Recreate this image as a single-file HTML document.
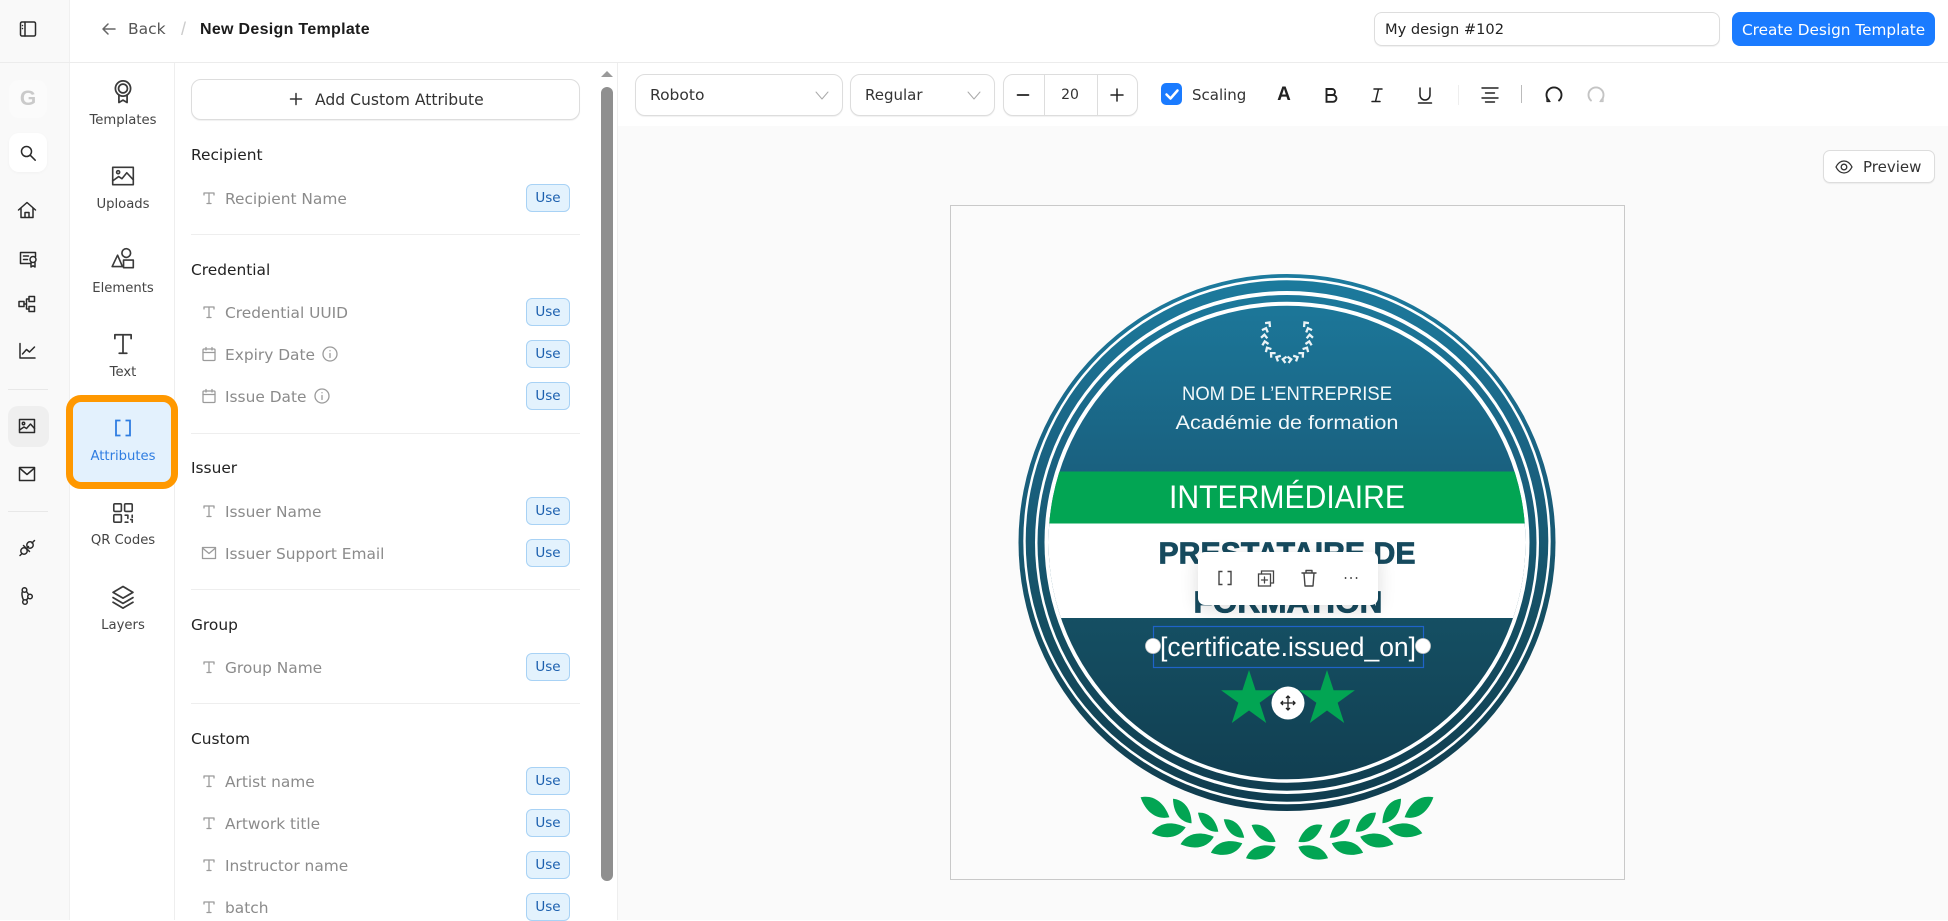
<!DOCTYPE html>
<html><head><meta charset="utf-8"><title>New Design Template</title>
<style>
html,body{margin:0;padding:0;background:#fff}
body{position:relative;width:1948px;height:920px;overflow:hidden;font-family:"DejaVu Sans","Liberation Sans",sans-serif;color:#222}
.b{position:absolute;box-sizing:border-box}
.t{position:absolute;white-space:nowrap;line-height:20px;margin-top:-10px}
.c{transform:translateX(-50%)}
.i{position:absolute;width:24px;height:24px;margin:-12px 0 0 -12px;fill:none;stroke:#2a2a2a;stroke-width:1.5;stroke-linecap:round;stroke-linejoin:round}
.n{font-size:13.2px;color:#444}
.h{font-size:15.4px;color:#222;left:191px}
.r{font-size:15.4px;color:#8b8b8b;left:225px}
.u{position:absolute;left:526px;width:44px;height:28px;margin-top:-14px;box-sizing:border-box;background:#e3f2fd;border:1px solid #a8d2f5;border-radius:6px;color:#1b5fae;font-size:13.500px;line-height:27px;text-align:center}
.d{position:absolute;left:191px;width:389px;height:1px;background:#eee}
.g{stroke:#9b9b9b;stroke-width:1.3}
.s{position:absolute;box-sizing:border-box;background:#fff;border:1px solid #ddd;border-radius:10px;box-shadow:0 1px 1px rgba(0,0,0,.06)}
</style></head><body>

<!-- rail -->
<div class="b" style="left:0;top:0;width:70px;height:920px;background:#f9f9f9;border-right:1px solid #f0f0f0"></div>
<div class="b" style="left:70px;top:0;width:1878px;height:62px;background:#fff"></div>
<div class="b" style="left:0;top:62px;width:1948px;height:1px;background:#ececec"></div>
<div class="b" style="left:174px;top:63px;width:1px;height:857px;background:#eee"></div>
<div class="b" style="left:617px;top:63px;width:1px;height:857px;background:#eee"></div>
<div class="b" style="left:618px;top:126px;width:1330px;height:794px;background:#fafafa"></div>

<svg class="i" style="left:28px;top:29px" viewBox="0 0 24 24"><rect x="4.500" y="5" width="15" height="14" rx="1.500"/><path d="M9 5v14M6.500 8.500h0M6.500 11.500h0"/></svg>

<div class="b" style="left:9px;top:80px;width:38px;height:38px;border-radius:10px;background:#fbfbfb"></div>
<div class="t" style="left:28px;top:99px;font-size:21px;font-weight:700;color:#cacaca;font-family:'Liberation Sans',sans-serif"><span class="c" style="position:absolute;left:0">G</span></div>
<div class="b" style="left:9px;top:133px;width:38px;height:39px;border-radius:10px;background:#fff;box-shadow:0 1px 3px rgba(0,0,0,.03)"></div>
<svg class="i" style="left:28px;top:153px" viewBox="0 0 24 24"><circle cx="10.500" cy="10.500" r="5"/><path d="M14.200 14.200l5 5"/></svg>
<svg class="i" style="left:27px;top:210px" viewBox="0 0 24 24"><path d="M3.500 12L12 4.500l8.500 7.500M6 10v9.500h12V10M10 19.500v-5h4v5"/></svg>
<svg class="i" style="left:28px;top:258px" viewBox="0 0 24 24"><path d="M15 17.500H4.500v-11h15v4"/><path d="M7.500 10h5M7.500 13.500h4"/><circle cx="17" cy="13.500" r="3"/><path d="M15 16.500v4.500l2-1.200 2 1.200v-4.500"/></svg>
<svg class="i" style="left:27px;top:304px" viewBox="0 0 24 24"><rect x="4" y="9.500" width="5" height="5"/><rect x="14" y="4.500" width="5.500" height="5"/><rect x="14" y="14.500" width="5.500" height="5"/><path d="M9 12h2.500V7H14M11.500 12v5H14"/></svg>
<svg class="i" style="left:27px;top:351px" viewBox="0 0 24 24"><path d="M5 4.500V19h15M7.500 15l4-4.500 3 2.500 5-5"/></svg>
<div class="b" style="left:8px;top:389px;width:40px;height:1px;background:#e8e8e8"></div>
<div class="b" style="left:8px;top:406px;width:41px;height:41px;border-radius:10px;background:#efefef"></div>
<svg class="i" style="left:27px;top:426px" viewBox="0 0 24 24"><rect x="4.500" y="5.500" width="15" height="13"/><circle cx="8.500" cy="9.500" r="1.200"/><path d="M4.500 16l4.500-3 2.500 1.500 4-4.500 4 4.500"/></svg>
<svg class="i" style="left:27px;top:474px" viewBox="0 0 24 24"><rect x="4.500" y="5.500" width="15" height="13"/><path d="M4.500 6l7.500 6.500L19.500 6"/></svg>
<div class="b" style="left:8px;top:511px;width:40px;height:1px;background:#e8e8e8"></div>
<svg class="i" style="left:27px;top:548px" viewBox="0 0 24 24"><circle cx="9" cy="15" r="3.200"/><circle cx="15" cy="9" r="3.200"/><path d="M5 19.500l2-2M17 7l2.500-2.500M11.500 12.500l2-2M8.500 9.500l6 6"/></svg>
<svg class="i" style="left:27px;top:596px" viewBox="0 0 24 24"><circle cx="9.500" cy="6" r="2.300"/><circle cx="15" cy="12.500" r="2.300"/><circle cx="10" cy="18" r="2.300"/><path d="M11.500 7.500l2 3M13 14l-1.500 2M7.500 7.500c-1 1.500-.5 6 1 8.500"/></svg>

<!-- header -->
<svg class="i" style="left:109px;top:29px;stroke:#666" viewBox="0 0 24 24"><path d="M18 12H6.500M11 7l-5 5 5 5"/></svg>
<div class="t" style="left:128px;top:29px;font-size:15.500px;color:#555">Back</div>
<div class="t" style="left:181px;top:29px;font-size:18px;color:#ccc;font-family:'Liberation Sans',sans-serif">/</div>
<div class="t" style="left:200px;top:30px;font-size:16px;font-weight:700;color:#1b1b1b;font-family:'Liberation Sans',sans-serif;letter-spacing:.3px">New Design Template</div>
<div class="s" style="left:1374px;top:12px;width:346px;height:34px;border-radius:8px"></div>
<div class="t" style="left:1385px;top:29.500px;font-size:14.600px;color:#222">My design #102</div>
<div class="b" style="left:1732px;top:12px;width:203px;height:34px;border-radius:8px;background:#1a7bff"></div>
<div class="t" style="left:1742px;top:29.500px;font-size:15.300px;color:#fff">Create Design Template</div>

<!-- module nav -->
<svg class="i" style="left:123px;top:92px;width:28px;height:28px;margin:-14px 0 0 -14px;stroke:#3a3a3a" viewBox="0 0 24 24"><circle cx="12" cy="9" r="6.500"/><circle cx="12" cy="9" r="3.800"/><path d="M8.500 14.500V21l3.500-2 3.500 2v-6.500"/></svg>
<div class="t n c" style="left:123px;top:120.500px">Templates</div>
<svg class="i" style="left:123px;top:176px;width:26px;height:26px;margin:-13px 0 0 -13px;stroke:#3a3a3a" viewBox="0 0 24 24"><rect x="2.500" y="4" width="19" height="16"/><circle cx="7.500" cy="8.500" r="1.400"/><path d="M2.500 16.500l5.500-4 3 2 4.500-5.500 6 6.500"/></svg>
<div class="t n c" style="left:123px;top:204.500px">Uploads</div>
<svg class="i" style="left:123px;top:259px;width:26px;height:26px;margin:-13px 0 0 -13px;stroke:#3a3a3a" viewBox="0 0 24 24"><circle cx="15" cy="6.500" r="4"/><path d="M7 8.500l-5 10.500h9.500z"/><rect x="12.500" y="13" width="9" height="7"/></svg>
<div class="t n c" style="left:123px;top:288.500px">Elements</div>
<svg class="i" style="left:123px;top:344px;width:26px;height:26px;margin:-13px 0 0 -13px;stroke:#3a3a3a;stroke-width:1.600" viewBox="0 0 24 24"><path d="M4.500 7V3.500h15V7M12 3.500V20.500M8.500 20.500h7"/></svg>
<div class="t n c" style="left:123px;top:372.500px">Text</div>

<div class="b" style="left:66px;top:395px;width:112px;height:94px;border:7px solid #ff9800;border-radius:15px;background:#e3f1fd"></div>
<svg class="i" style="left:123px;top:428px;stroke:#2f7de1;stroke-width:1.800;stroke-linecap:butt;stroke-linejoin:miter" viewBox="0 0 24 24"><path d="M9.500 4.500H5v15h4.500M14.500 4.500H19v15h-4.500"/></svg>
<div class="t n c" style="left:123px;top:457px;color:#2f7de1">Attributes</div>
<svg class="i" style="left:123px;top:513px;width:26px;height:26px;margin:-13px 0 0 -13px;stroke:#3a3a3a" viewBox="0 0 24 24"><rect x="3.500" y="3.500" width="7" height="7" rx="1"/><rect x="13.500" y="3.500" width="7" height="7" rx="1"/><rect x="3.500" y="13.500" width="7" height="7" rx="1"/><path d="M14 14h2.500v3M20.500 14v2M14 20.500h2.500M19 18h1.500v2.500"/></svg>
<div class="t n c" style="left:123px;top:540.500px">QR Codes</div>
<svg class="i" style="left:123px;top:597px;width:28px;height:28px;margin:-14px 0 0 -14px;stroke:#3a3a3a" viewBox="0 0 24 24"><path d="M12 3l8.500 5-8.500 5-8.500-5zM3.500 12.500L12 17.500l8.500-5M3.500 16.500L12 21.500l8.500-5"/></svg>
<div class="t n c" style="left:123px;top:625.500px">Layers</div>

<!-- attribute panel -->
<div class="s" style="left:191px;top:79px;width:389px;height:41px"></div>
<svg class="i" style="left:296px;top:99px;stroke:#333" viewBox="0 0 24 24"><path d="M12 6.500v11M6.500 12h11"/></svg>
<div class="t" style="left:315px;top:99.500px;font-size:15.600px;color:#333">Add Custom Attribute</div>

<div class="t h" style="top:154.500px">Recipient</div>
<svg class="i g" style="left:209px;top:198px" viewBox="0 0 24 24"><path d="M7 9V7h10v2M12 7v10.500M10 17.500h4"/></svg>
<div class="t r" style="top:198.500px">Recipient Name</div><div class="u" style="top:198px">Use</div>
<div class="d" style="top:234px"></div>

<div class="t h" style="top:269.500px">Credential</div>
<svg class="i g" style="left:209px;top:312px" viewBox="0 0 24 24"><path d="M7 9V7h10v2M12 7v10.500M10 17.500h4"/></svg>
<div class="t r" style="top:312.500px">Credential UUID</div><div class="u" style="top:312px">Use</div>
<svg class="i g" style="left:209px;top:354px" viewBox="0 0 24 24"><rect x="6" y="7" width="12" height="11.500" rx="1"/><path d="M6 10.500h12M9 5.500v2.500M15 5.500v2.500"/></svg>
<div class="t r" style="top:354.500px">Expiry Date</div><div class="u" style="top:354px">Use</div>
<svg class="i g" style="left:330px;top:354px" viewBox="0 0 24 24"><circle cx="12" cy="12" r="7"/><path d="M12 11.500v4M12 8.700v.1"/></svg>
<svg class="i g" style="left:209px;top:396px" viewBox="0 0 24 24"><rect x="6" y="7" width="12" height="11.500" rx="1"/><path d="M6 10.500h12M9 5.500v2.500M15 5.500v2.500"/></svg>
<div class="t r" style="top:396.500px">Issue Date</div><div class="u" style="top:396px">Use</div>
<svg class="i g" style="left:322px;top:396px" viewBox="0 0 24 24"><circle cx="12" cy="12" r="7"/><path d="M12 11.500v4M12 8.700v.1"/></svg>
<div class="d" style="top:433px"></div>

<div class="t h" style="top:467.500px">Issuer</div>
<svg class="i g" style="left:209px;top:511px" viewBox="0 0 24 24"><path d="M7 9V7h10v2M12 7v10.500M10 17.500h4"/></svg>
<div class="t r" style="top:511.500px">Issuer Name</div><div class="u" style="top:511px">Use</div>
<svg class="i g" style="left:209px;top:553px" viewBox="0 0 24 24"><rect x="5.500" y="6.500" width="13" height="11"/><path d="M5.500 7l6.500 5.500L18.500 7"/></svg>
<div class="t r" style="top:553.500px">Issuer Support Email</div><div class="u" style="top:553px">Use</div>
<div class="d" style="top:589px"></div>

<div class="t h" style="top:624.500px">Group</div>
<svg class="i g" style="left:209px;top:667px" viewBox="0 0 24 24"><path d="M7 9V7h10v2M12 7v10.500M10 17.500h4"/></svg>
<div class="t r" style="top:667.500px">Group Name</div><div class="u" style="top:667px">Use</div>
<div class="d" style="top:703px"></div>

<div class="t h" style="top:738.500px">Custom</div>
<svg class="i g" style="left:209px;top:781px" viewBox="0 0 24 24"><path d="M7 9V7h10v2M12 7v10.500M10 17.500h4"/></svg>
<div class="t r" style="top:781.500px">Artist name</div><div class="u" style="top:781px">Use</div>
<svg class="i g" style="left:209px;top:823px" viewBox="0 0 24 24"><path d="M7 9V7h10v2M12 7v10.500M10 17.500h4"/></svg>
<div class="t r" style="top:823.500px">Artwork title</div><div class="u" style="top:823px">Use</div>
<svg class="i g" style="left:209px;top:865px" viewBox="0 0 24 24"><path d="M7 9V7h10v2M12 7v10.500M10 17.500h4"/></svg>
<div class="t r" style="top:865.500px">Instructor name</div><div class="u" style="top:865px">Use</div>
<svg class="i g" style="left:209px;top:907px" viewBox="0 0 24 24"><path d="M7 9V7h10v2M12 7v10.500M10 17.500h4"/></svg>
<div class="t r" style="top:907.500px">batch</div><div class="u" style="top:907px">Use</div>

<!-- scrollbar -->
<div class="b" style="left:601px;top:87px;width:12px;height:794px;border-radius:6px;background:#8f8f8f"></div>
<svg style="position:absolute;left:601px;top:70px" width="12" height="8"><path d="M6 1L12 7H0z" fill="#9a9a9a"/></svg>

<!-- toolbar -->
<div class="s" style="left:635px;top:74px;width:208px;height:42px"></div>
<div class="t" style="left:650px;top:95px;font-size:15.500px;color:#333">Roboto</div>
<svg class="i" style="left:822px;top:95px;stroke:#aaa;stroke-width:1" viewBox="0 0 24 24"><path d="M6 9l6 7 6-7"/></svg>
<div class="s" style="left:850px;top:74px;width:145px;height:42px"></div>
<div class="t" style="left:865px;top:95px;font-size:15px;color:#333">Regular</div>
<svg class="i" style="left:974px;top:95px;stroke:#aaa;stroke-width:1" viewBox="0 0 24 24"><path d="M6 9l6 7 6-7"/></svg>
<div class="s" style="left:1003px;top:74px;width:135px;height:42px"></div>
<div class="b" style="left:1044px;top:75px;width:1px;height:40px;background:#ddd"></div>
<div class="b" style="left:1097px;top:75px;width:1px;height:40px;background:#ddd"></div>
<svg class="i" style="left:1023px;top:95px;stroke:#222;stroke-width:1.700" viewBox="0 0 24 24"><path d="M6.500 12h11"/></svg>
<div class="t c" style="left:1070px;top:95px;font-size:14px;color:#333">20</div>
<svg class="i" style="left:1117px;top:95px;stroke:#222;stroke-width:1.500" viewBox="0 0 24 24"><path d="M12 6v12M6 12h12"/></svg>
<div class="b" style="left:1161px;top:83px;width:21px;height:22px;border-radius:5px;background:#1a7bff"></div>
<svg class="i" style="left:1171.500px;top:94px;stroke:#fff;stroke-width:2.500" viewBox="0 0 24 24"><path d="M6.500 12.500l4 4 7-8"/></svg>
<div class="t" style="left:1192px;top:95px;font-size:15px;color:#333">Scaling</div>
<div class="t c" style="left:1284px;top:95px;font-size:19px;font-weight:700;color:#222;font-family:'Liberation Sans',sans-serif">A</div>
<svg class="i" style="left:1331px;top:95px;stroke:#222;stroke-width:1.900;stroke-linejoin:miter" viewBox="0 0 24 24"><path d="M7.500 6h5.500a3 3 0 010 6H7.500zM7.500 12h6.500a3.400 3.400 0 010 6.800H7.500z"/></svg>
<svg class="i" style="left:1377px;top:95px;stroke:#222;stroke-width:1.500" viewBox="0 0 24 24"><path d="M9 6h8M7 18.500h8M13.500 6L10.500 18.500"/></svg>
<svg class="i" style="left:1425px;top:95px;stroke:#222;stroke-width:1.500" viewBox="0 0 24 24"><path d="M7 5v7a5 5 0 0010 0V5M5.500 20h13"/></svg>
<div class="b" style="left:1458px;top:85px;width:1px;height:20px;background:#eee"></div>
<svg class="i" style="left:1490px;top:95px;stroke:#222;stroke-width:1.400" viewBox="0 0 24 24"><path d="M4 6h16M7.500 11h9M4 16h16M7.500 20h9" transform="translate(0 -1)"/></svg>
<div class="b" style="left:1521px;top:85px;width:1px;height:18px;background:#bbb"></div>
<svg class="i" style="left:1554px;top:95px;stroke:#222;stroke-width:1.900" viewBox="0 0 24 24"><path d="M7 17.500A7.500 7.500 0 1117 17.500"/><path d="M5 15.500v3h3" stroke-width="1.300"/></svg>
<svg class="i" style="left:1596px;top:95px;stroke:#c4c4c4;stroke-width:1.900" viewBox="0 0 24 24"><path d="M7 17.500A7.500 7.500 0 1117 17.500"/><path d="M19 15.500v3h-3" stroke-width="1.300"/></svg>

<!-- preview -->
<div class="s" style="left:1823px;top:150px;width:112px;height:33px;border-radius:7px"></div>
<svg class="i" style="left:1844px;top:167px;stroke:#333;stroke-width:1.300" viewBox="0 0 24 24"><path d="M4 12c2-4 5-6 8-6s6 2 8 6c-2 4-5 6-8 6s-6-2-8-6z"/><circle cx="12" cy="12" r="2.800"/></svg>
<div class="t" style="left:1863px;top:167px;font-size:15px;color:#333">Preview</div>

<!-- canvas -->
<div class="b" style="left:950px;top:205px;width:675px;height:675px;border:1px solid #c9c9c9;background:#fbfbfb"></div>

<svg style="position:absolute;left:0;top:0" width="1948" height="920" viewBox="0 0 1948 920">
<defs>
<linearGradient id="gr" gradientUnits="userSpaceOnUse" x1="0" y1="274" x2="0" y2="811">
<stop offset="0" stop-color="#1c7b9e"/><stop offset=".36" stop-color="#1a6180"/><stop offset=".64" stop-color="#154f63"/><stop offset="1" stop-color="#103c4e"/>
</linearGradient>
<clipPath id="cp"><ellipse cx="1287" cy="542.500" rx="238.500" ry="236.800"/></clipPath>
<path id="lf" d="M0 0C.22 -.24 .58 -.3 1 0C.78 .24 .42 .3 0 0"/>
<path id="ch" d="M1290 356.500L1286.700 359.700L1290 362.800" fill="none" stroke="#eaf3f6" stroke-width="2.300"/>
<g id="lv" fill="#02a553">
<use href="#lf" transform="matrix(28.800 20 -20 28.800 1140.600 797.300)"/>
<use href="#lf" transform="matrix(18.600 24.600 -24.600 18.600 1173 798.700)"/>
<use href="#lf" transform="matrix(20.300 19 -19 20.300 1198 812.700)"/>
<use href="#lf" transform="matrix(20.400 18.400 -18.400 20.400 1223.800 819.300)"/>
<use href="#lf" transform="matrix(24 16.700 -16.700 24 1251.600 825)"/>
<use href="#lf" transform="matrix(34 -6 6 34 1151.700 833.300)"/>
<use href="#lf" transform="matrix(33.300 -7.600 7.600 33.300 1180.500 844.300)"/>
<use href="#lf" transform="matrix(31.400 -9.400 9.400 31.400 1210.900 852.700)"/>
<use href="#lf" transform="matrix(29.600 -11.600 11.600 29.600 1246 858.300)"/>
</g>
<g id="lau">
<use href="#ch" transform="rotate(10 1287 337)"/>
<use href="#ch" transform="rotate(27 1287 337)"/>
<use href="#ch" transform="rotate(44 1287 337)"/>
<use href="#ch" transform="rotate(61 1287 337)"/>
<use href="#ch" transform="rotate(78 1287 337)"/>
<use href="#ch" transform="rotate(95 1287 337)"/>
<use href="#ch" transform="rotate(112 1287 337)"/>
<use href="#ch" transform="rotate(129 1287 337)"/>
</g>
</defs>
<circle cx="1287" cy="542.500" r="268.500" fill="url(#gr)"/>
<ellipse cx="1287" cy="541" rx="263.700" ry="263.300" fill="#fff"/>
<ellipse cx="1287" cy="541" rx="261.300" ry="260.700" fill="url(#gr)"/>
<ellipse cx="1287" cy="542.500" rx="252" ry="251.500" fill="#fff"/>
<ellipse cx="1287" cy="542.850" rx="249.500" ry="247.850" fill="url(#gr)"/>
<ellipse cx="1287" cy="542.200" rx="242.500" ry="240.500" fill="#fff"/>
<ellipse cx="1287" cy="542.500" rx="238.500" ry="236.800" fill="url(#gr)"/>
<g clip-path="url(#cp)">
<rect x="1040" y="471.500" width="494" height="52" fill="#02a553"/>
<rect x="1040" y="523.500" width="494" height="94.500" fill="#fff"/>
</g>
<use href="#lau"/>
<use href="#lau" transform="matrix(-1 0 0 1 2574 0)"/>
<g font-family="'Liberation Sans',sans-serif" text-anchor="middle">
<text x="1287" y="400" font-size="19" fill="#f2f8fa" textLength="210" lengthAdjust="spacingAndGlyphs">NOM DE L’ENTREPRISE</text>
<text x="1287" y="429" font-size="19" fill="#f2f8fa" textLength="223" lengthAdjust="spacingAndGlyphs">Académie de formation</text>
<text x="1287" y="508" font-size="32" fill="#fff" textLength="236" lengthAdjust="spacingAndGlyphs">INTERMÉDIAIRE</text>
<text x="1287" y="563.500" font-size="31" font-weight="700" fill="#164a5e" stroke="#164a5e" stroke-width=".8" textLength="257" lengthAdjust="spacingAndGlyphs">PRESTATAIRE DE</text>
<text x="1288" y="612.500" font-size="31" font-weight="700" fill="#164a5e" stroke="#164a5e" stroke-width=".8" textLength="189" lengthAdjust="spacingAndGlyphs">FORMATION</text>
<text x="1288" y="656" font-size="27" fill="#fff" textLength="256" lengthAdjust="spacingAndGlyphs">[certificate.issued_on]</text>
</g>
<rect x="1153.500" y="626.500" width="270" height="41" fill="none" stroke="#1f63c9" stroke-width="1.200"/>
<circle cx="1153" cy="646" r="7.500" fill="#fff" stroke="#ccc" stroke-width=".8"/>
<circle cx="1423" cy="646" r="7.500" fill="#fff" stroke="#ccc" stroke-width=".8"/>
<polygon transform="translate(1249 699.300)" fill="#02a553" points="0,-29.300 6.580,-9.050 27.900,-9.050 10.650,3.460 17.200,23.700 0,11.200 -17.200,23.700 -10.650,3.460 -27.900,-9.050 -6.580,-9.050"/>
<polygon transform="translate(1327 699.300)" fill="#02a553" points="0,-29.300 6.580,-9.050 27.900,-9.050 10.650,3.460 17.200,23.700 0,11.200 -17.200,23.700 -10.650,3.460 -27.900,-9.050 -6.580,-9.050"/>
<circle cx="1288" cy="703" r="16.500" fill="#fff"/>
<path d="M1288 696v14M1281 703h14M1286 698l2-2 2 2M1286 708l2 2 2-2M1283 701l-2 2 2 2M1293 701l2 2-2 2" fill="none" stroke="#222" stroke-width="1.300"/>
<use href="#lv"/>
<use href="#lv" transform="matrix(-1 0 0 1 2574 0)"/>
</svg>

<!-- floating toolbar -->
<div class="b" style="left:1198px;top:552px;width:180px;height:53px;background:#fff;border-radius:7px;box-shadow:0 4px 18px rgba(0,0,0,.14)"></div>
<svg class="i" style="left:1225px;top:578px;stroke:#444;stroke-width:1.400;stroke-linecap:butt;stroke-linejoin:miter" viewBox="0 0 24 24"><path d="M9.500 5.500H6v13h3.500M14.500 5.500H18v13h-3.500"/></svg>
<svg class="i" style="left:1266px;top:578px;stroke:#444;stroke-width:1.300;stroke-linejoin:miter" viewBox="0 0 24 24"><rect x="4.500" y="8" width="12" height="12"/><path d="M7.500 8V5h12v12h-3M10.500 11v6M7.500 14h6"/></svg>
<svg class="i" style="left:1309px;top:578px;stroke:#444;stroke-width:1.400" viewBox="0 0 24 24"><path d="M5 7h14M9 7V4.500h6V7M7 7l1 13h8l1-13"/></svg>
<svg class="i" style="left:1351px;top:578px;stroke:#222;stroke-width:1.700" viewBox="0 0 24 24"><path d="M6.500 12h.1M12 12h.1M17.500 12h.1"/></svg>

</body></html>
